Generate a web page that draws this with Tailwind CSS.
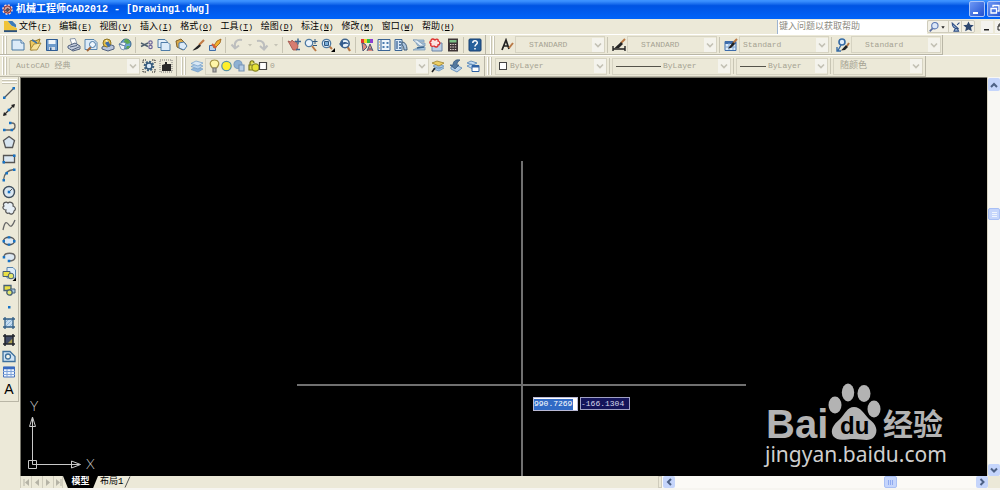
<!DOCTYPE html>
<html lang="zh-CN">
<head>
<meta charset="utf-8">
<title>机械工程师CAD2012 - [Drawing1.dwg]</title>
<script src="https://cdn.jsdelivr.net/npm/@tailwindcss/browser@4"></script>
</head>
<body class="flex h-screen flex-col overflow-hidden bg-[#ece9d8] font-['Liberation_Mono','Noto_Sans_CJK_SC',monospace] text-[8px] text-black">
<svg class="hidden" aria-hidden="true">
  <symbol id="chev" viewBox="0 0 12 14"><path d="M3 5.500l3 3 3-3" fill="none" stroke="#c3c1b4" stroke-width="1.600"/></symbol>
  <symbol id="dropdot" viewBox="0 0 6 14"><path d="M1 6h4l-2 2.500z" fill="#c5c3b6"/></symbol>
  <symbol id="layers" viewBox="0 0 14 14"><g stroke="#6f9cc8" stroke-width=".7"><path d="M1 10.500l5-2.500 7 2-5 3z" fill="#8fb4da"/><path d="M1 7.500l5-2.500 7 2-5 3z" fill="#b5d0ea"/><path d="M1 4.500l5-2.500 7 2-5 3z" fill="#d9e8f5"/></g></symbol>
  <symbol id="brush" viewBox="0 0 14 14"><path d="M13 2L8 7" stroke="#c07a45" stroke-width="2.200"/><path d="M8.500 6.200l1.500 1.600c-2 2-4 4.200-8.500 4.700 1.500-1.500 4-4.100 7-6.300z" fill="#222"/></symbol>
</svg>

<header class="flex h-[19px] shrink-0 items-center overflow-hidden bg-linear-to-b from-[#3c92ff] from-5% via-[#0054e3] via-30% to-[#0064fa] pl-px text-white">
  <svg class="mr-px size-[13px] shrink-0" viewBox="0 0 14 14"><circle cx="7" cy="7" r="4.500" fill="#c94f45" stroke="#f0d0cc" stroke-width="2.600" stroke-dasharray="2 1.500"/><circle cx="7" cy="7" r="3.800" fill="#d8a8a0" stroke="#8c2c2c"/><path d="M4 8l3-3 3 2-3 3z" fill="#534a5e"/></svg>
  <h1 class="min-w-0 flex-1 pl-px text-[10px] leading-[19px] font-bold whitespace-nowrap">机械工程师CAD2012 - [Drawing1.dwg]</h1>
  <div class="flex h-[17px] w-[31px] shrink-0 gap-[2px]">
    <button aria-label="最小化" class="h-[16px] w-[16px] shrink-0 rounded-[2px] border border-[#a9c4f8] bg-linear-to-br from-[#6d97f5] to-[#2450cf]"><svg viewBox="0 0 14 14"><path d="M3 10h5v2H3z" fill="#fff"/></svg></button>
    <button aria-label="还原" class="h-[16px] w-[16px] shrink-0 rounded-[2px] border border-[#a9c4f8] bg-linear-to-br from-[#6d97f5] to-[#2450cf]"><svg viewBox="0 0 14 14"><path d="M5 5V3.500h6V9H9.500M3 6.500h5.500V11H3z" fill="none" stroke="#fff" stroke-width="1.300"/></svg></button>
  </div>
</header>

<nav class="flex h-[15px] shrink-0 items-center overflow-hidden pl-[4px]">
  <svg class="size-[13px] shrink-0" viewBox="0 0 14 14"><path d="M1 1h5l3 3v8H1z" fill="#fff"/><path d="M0 1h4l4 5 6 3v4H0z" fill="#f0c43a"/><path d="M4 1h5l4 4v3L8 6z" fill="#3e7bb8"/><path d="M0 11h14v2H0z" fill="#28507e"/></svg>
  <div class="grid w-[403px] shrink-0 grid-cols-10 text-left text-[8px] leading-[15px] whitespace-nowrap">
    <button class="pl-[2px] text-left"><span class="text-[9px]">文件</span>(<u>F</u>)</button>
    <button class="pl-[2px] text-left"><span class="text-[9px]">编辑</span>(<u>E</u>)</button>
    <button class="pl-[2px] text-left"><span class="text-[9px]">视图</span>(<u>V</u>)</button>
    <button class="pl-[2px] text-left"><span class="text-[9px]">插入</span>(<u>I</u>)</button>
    <button class="pl-[2px] text-left"><span class="text-[9px]">格式</span>(<u>O</u>)</button>
    <button class="pl-[2px] text-left"><span class="text-[9px]">工具</span>(<u>T</u>)</button>
    <button class="pl-[2px] text-left"><span class="text-[9px]">绘图</span>(<u>D</u>)</button>
    <button class="pl-[2px] text-left"><span class="text-[9px]">标注</span>(<u>N</u>)</button>
    <button class="pl-[2px] text-left"><span class="text-[9px]">修改</span>(<u>M</u>)</button>
    <button class="pl-[2px] text-left"><span class="text-[9px]">窗口</span>(<u>W</u>)</button>
  </div>
  <button class="shrink-0 pl-[2px] leading-[15px] whitespace-nowrap"><span class="text-[9px]">帮助</span>(<u>H</u>)</button>
  <div class="min-w-0 flex-1"></div>
  <input aria-label="键入问题以获取帮助" placeholder="键入问题以获取帮助" class="h-[14px] w-[150px] shrink-0 border-l border-[#9db4d0] bg-white px-px text-[9px] leading-[14px] placeholder:text-[#8c8a80]">
  <div class="flex h-[13px] w-[48px] shrink-0 items-center rounded-[2px] border border-[#cfccbc] bg-[#f2f0e6]">
    <button aria-label="搜索" class="flex w-[20px] items-center"><svg class="size-[12px]" viewBox="0 0 14 14"><path d="M2 12l4-4" stroke="#5c6fa0" stroke-width="2"/><circle cx="8" cy="5.500" r="3.700" fill="#dbe7f8" stroke="#5b78b4" stroke-width="1.300"/></svg><svg class="h-[12px] w-[6px]" viewBox="0 0 6 14"><path d="M1 6h4L3 9z" fill="#222"/></svg></button>
    <button aria-label="通讯中心" class="flex w-[13px] justify-center border-l border-[#cfccbc]"><svg class="size-[11px]" viewBox="0 0 14 14"><path d="M2 2l9 8M3 2c-1 5 2 8 8 8M7 9l-2 4h6L9 9M9 5l3-3" fill="#94b3d6" stroke="#2f4c80" stroke-width="1.300"/></svg></button>
    <button aria-label="收藏夹" class="flex w-[13px] justify-center border-l border-[#cfccbc]"><svg class="size-[11px]" viewBox="0 0 14 14"><path d="M7 .5l2 4.300 4.700.5-3.500 3.100 1 4.800L7 10.700l-4.200 2.500 1-4.800L.3 5.300 5 4.800z" fill="#2c466f"/></svg></button>
  </div>
  <div class="flex w-[25px] shrink-0 gap-[2px] pl-[6px]">
    <button aria-label="最小化图形" class="size-[12px] shrink-0 bg-[#f4f3ee]"><svg viewBox="0 0 12 12"><path d="M3 8h5v1.500H3z" fill="#222"/></svg></button>
    <button aria-label="还原图形" class="size-[12px] shrink-0 bg-[#f4f3ee]"><svg viewBox="0 0 12 12"><path d="M4 5V3h5v4H8M3 5h4v4H3z" fill="none" stroke="#222"/></svg></button>
  </div>
</nav>

<!-- Upper toolbar row -->
<div class="flex h-[21px] shrink-0 overflow-hidden border-t border-white">
  <div class="flex h-[20px] shrink-0 items-center border-r border-b border-[#b9b6a6] pr-[2px]">
    <div class="flex w-[9px] gap-px pl-[2px]"><i class="h-[18px] w-[2px] border-l border-white bg-[#c8c5b4]"></i><i class="h-[18px] w-[2px] border-l border-white bg-[#c8c5b4]"></i></div>
    <button aria-label="新建" class="flex w-[17px] justify-center"><svg class="size-[14px]" viewBox="0 0 14 14"><path d="M1 2h9l3 3v7H1z" fill="#dcebf8" stroke="#4878a4"/><path d="M10 2v3h3" fill="#fff" stroke="#4878a4"/></svg></button>
    <button aria-label="打开" class="flex w-[17px] justify-center"><svg class="size-[14px]" viewBox="0 0 14 14"><path d="M2 3l3-1 2 1 5-2-3 10-6 1z" fill="#eec860" stroke="#9b7a26"/><path d="M2 12l4-6 7-1-4 7z" fill="#f8e29a" stroke="#9b7a26" stroke-width=".8"/><path d="M4 2l5 3" stroke="#3e74a8" stroke-width="1.500"/></svg></button>
    <button aria-label="保存" class="flex w-[17px] justify-center"><svg class="size-[14px]" viewBox="0 0 14 14"><path d="M1.500 1.500h11v11h-11z" fill="#6f9ccc" stroke="#2f5c94"/><path d="M3.500 2h7v4h-7z" fill="#f0f5fa"/><path d="M4 9h6v3H4z" fill="#d4dde8"/><path d="M5 9.500h1.500V12H5z" fill="#2f5c94"/></svg></button>
    <i class="mx-[2px] h-[16px] w-px bg-[#c8c5b4]"></i>
    <button aria-label="打印" class="flex w-[17px] justify-center"><svg class="size-[14px]" viewBox="0 0 14 14"><path d="M3 1l5-.5 2 5-5 1z" fill="#fff" stroke="#6f7f98" stroke-width=".8"/><path d="M1 8l7-3 5 3v3l-7 2-5-3z" fill="#c4cddd" stroke="#51617e"/><path d="M3 9l7-1.500M5 12l7-3" stroke="#51617e"/></svg></button>
    <button aria-label="打印预览" class="flex w-[17px] justify-center"><svg class="size-[14px]" viewBox="0 0 14 14"><path d="M1 1.500h9l3 3v7H1z" fill="#dcebf8" stroke="#5885ae"/><path d="M3 13l4-4" stroke="#a5673a" stroke-width="2"/><circle cx="8.500" cy="6.500" r="3" fill="#eef6fd" stroke="#4878a4"/></svg></button>
    <button aria-label="发布" class="flex w-[17px] justify-center"><svg class="size-[14px]" viewBox="0 0 14 14"><path d="M1 9l7-3 5 2v3l-6 2-6-2z" fill="#b8c4da" stroke="#51617e"/><circle cx="6" cy="5" r="4" fill="#e6be48" stroke="#8d7426"/><path d="M4 5l3-2 3 5-3 1z" fill="#3f6da8"/><path d="M4 3l2-1 1 2" fill="#fff"/></svg></button>
    <button aria-label="三维 DWF" class="flex w-[17px] justify-center"><svg class="size-[14px]" viewBox="0 0 14 14"><circle cx="8" cy="6" r="5" fill="#68a7d3" stroke="#39658c"/><path d="M7 1c3 0 5 2 5 4L9 6 6 4zM9 8l3 0-2 3-2-1z" fill="#5ea84f"/><path d="M1 6l6 2-1 4-3-1zM1 6l4-2 3 1-1 3z" fill="#eef4fb" stroke="#56779c" stroke-width=".7"/></svg></button>
    <i class="mx-[2px] h-[16px] w-px bg-[#c8c5b4]"></i>
    <button aria-label="剪切" class="flex w-[17px] justify-center"><svg class="size-[14px]" viewBox="0 0 14 14"><path d="M1 5l7 3.500M1 8.500L8 5" stroke="#506070" stroke-width="1.400"/><circle cx="10.500" cy="4.500" r="1.700" fill="none" stroke="#6c6499" stroke-width="1.200"/><circle cx="10.500" cy="9" r="1.700" fill="none" stroke="#6c6499" stroke-width="1.200"/></svg></button>
    <button aria-label="复制" class="flex w-[17px] justify-center"><svg class="size-[14px]" viewBox="0 0 14 14"><path d="M1 1.500h7l2 2v6H1z" fill="#e4eff9" stroke="#4f7ca8"/><path d="M4 4.500h7l2 2v6H4z" fill="#dcebf8" stroke="#4f7ca8"/></svg></button>
    <button aria-label="粘贴" class="flex w-[17px] justify-center"><svg class="size-[14px]" viewBox="0 0 14 14"><path d="M2 3l5-2 5 5-3 6-6-3z" fill="#d8a94a" stroke="#80622a"/><path d="M5 5l5-1 3 4-3 4-5-2z" fill="#dcebf8" stroke="#4f7ca8"/></svg></button>
    <button aria-label="特性匹配" class="flex w-[17px] justify-center"><svg class="size-[14px]"><use href="#brush"/></svg></button>
    <button aria-label="块编辑器" class="flex w-[17px] justify-center"><svg class="size-[14px]" viewBox="0 0 14 14"><path d="M1.500 7.500h6v5h-6z" fill="#b9d3ee" stroke="#3f6da8"/><path d="M13 1L9 3 5 9l2 1 5-5z" fill="#f1b02e" stroke="#955d16" stroke-width=".8"/><path d="M4 6l4 4" stroke="#d65c3b" stroke-width="2"/></svg></button>
    <i class="mx-[2px] h-[16px] w-px bg-[#c8c5b4]"></i>
    <button aria-label="放弃" class="flex w-[18px] justify-center"><svg class="size-[14px]" viewBox="0 0 14 14"><path d="M12 2C7 1 4 4 5 9M1.500 6.500l3.500 4 4-3" fill="none" stroke="#bdbebe" stroke-width="2"/></svg></button>
    <button aria-label="放弃列表" class="flex w-[7px] justify-center"><svg class="h-[14px] w-[6px]"><use href="#dropdot"/></svg></button>
    <button aria-label="重做" class="flex w-[18px] justify-center"><svg class="size-[14px]" viewBox="0 0 14 14"><path d="M2 3c5-1 8 2 7 7M5 8l4 3.500 3.500-4" fill="none" stroke="#bdbebe" stroke-width="2"/></svg></button>
    <button aria-label="重做列表" class="flex w-[9px] justify-center"><svg class="h-[14px] w-[6px]"><use href="#dropdot"/></svg></button>
    <i class="mx-[2px] h-[16px] w-px bg-[#c8c5b4]"></i>
    <button aria-label="实时平移" class="flex w-[17px] justify-center"><svg class="size-[14px]" viewBox="0 0 14 14"><path d="M1 3l3 1 1-2 2 2 2-1 2 5-1 4H6z" fill="#d77c70" stroke="#9c5148" stroke-width=".8"/><path d="M11 .5v6M8 3.500h6M9 11.500h4" stroke="#3e6790" stroke-width="1.500"/></svg></button>
    <button aria-label="实时缩放" class="flex w-[17px] justify-center"><svg class="size-[14px]" viewBox="0 0 14 14"><path d="M8 8l4 5" stroke="#b87845" stroke-width="2"/><circle cx="5" cy="5" r="3.700" fill="#eaf3fb" stroke="#507ba3" stroke-width="1.300"/><path d="M11 1v5M8.500 3.500h5M9 7.500h4" stroke="#31587f"/></svg></button>
    <button aria-label="窗口缩放" class="flex w-[17px] justify-center"><svg class="size-[14px]" viewBox="0 0 14 14"><path d="M8 8l3 3" stroke="#b87845" stroke-width="2"/><circle cx="5.500" cy="5.500" r="4.200" fill="#eaf3fb" stroke="#507ba3" stroke-width="1.300"/><path d="M3.500 3.500h4v4h-4z" fill="#7bafda" stroke="#31587f"/><path d="M14 10v4h-4z"/></svg></button>
    <button aria-label="缩放上一个" class="flex w-[17px] justify-center"><svg class="size-[14px]" viewBox="0 0 14 14"><path d="M9 8l3 5" stroke="#b87845" stroke-width="2.200"/><circle cx="7" cy="5.500" r="4.200" fill="#eaf3fb" stroke="#40658e" stroke-width="1.500"/><path d="M1 6l4-4v2.500c3-1 5 0 6 2-2-1-4-1-6 0v3z" fill="#355d8e"/></svg></button>
    <i class="mx-[2px] h-[16px] w-px bg-[#c8c5b4]"></i>
    <button aria-label="特性" class="flex w-[17px] justify-center"><svg class="size-[14px]" viewBox="0 0 14 14"><path d="M1 1h3v4H1z" fill="#e33535"/><path d="M4 1h3v4H4z" fill="#efdc27"/><path d="M7 1h3v4H7z" fill="#32b84b"/><path d="M10 1h3v4h-3z" fill="#8d3fd1"/><path d="M2 5l3 1 2 3-4 4zM7 13l3-7 3 7M8 11h4" fill="#dc8b80" stroke="#4e5878"/></svg></button>
    <button aria-label="设计中心" class="flex w-[17px] justify-center"><svg class="size-[14px]" viewBox="0 0 14 14"><path d="M1 1.500h12v11H1z" fill="#edf4fb" stroke="#396394"/><path d="M4 2v10" stroke="#396394"/><path d="M5.500 4h2v2h-2zM9.500 4h2v2h-2zM5.500 8h2v2h-2zM9.500 8h2v2h-2z" fill="#4b7bb0"/><path d="M2 4h1M2 7h1M2 10h1" stroke="#d69a34"/></svg></button>
    <button aria-label="工具选项板" class="flex w-[18px] justify-center"><svg class="size-[14px]" viewBox="0 0 14 14"><path d="M1 1.500h7v11H1z" fill="#dcebf8" stroke="#396394"/><path d="M3 3v8M5 4h2M5 7h2M5 10h2" stroke="#396394" stroke-width="1.300"/><path d="M8 4c3 0 5 3 5 8h-3c0-3-1-5-2-5z" fill="#adc6df" stroke="#3c5977"/></svg></button>
    <button aria-label="图纸集管理器" class="flex w-[17px] justify-center"><svg class="size-[14px]" viewBox="0 0 14 14"><path d="M1 2h11v2H4zM4 5h9v3H6zM1 12l6-3h6v3z" fill="#a8c6df" stroke="#7d9ab6" stroke-width=".8"/><path d="M1 2l7 6h5L5 2z" fill="#e1edf6" stroke="#7d9ab6" stroke-width=".8"/><path d="M5 10l7-1" stroke="#39658f" stroke-width="1.500"/></svg></button>
    <button aria-label="标记集管理器" class="flex w-[17px] justify-center"><svg class="size-[14px]" viewBox="0 0 14 14"><path d="M3 5h10v8H3z" fill="#bdd0e5" stroke="#6b84a5"/><path d="M2 3c0-3 3-2 4-1 2-2 4 0 3 1 3 1 2 4 0 4 0 3-3 2-4 1-3 1-4-1-3-2-2-1-1-3 0-3z" fill="#fbe3e1" stroke="#dc3030" stroke-width="1.300"/></svg></button>
    <button aria-label="计算器" class="flex w-[17px] justify-center"><svg class="size-[14px]" viewBox="0 0 14 14"><path d="M2 .5h10v13H2z" fill="#3f3638"/><path d="M3.500 2h7v2.500h-7z" fill="#7cc286"/><path d="M4 6.500h7M4 9h7M4 11.500h7" stroke="#e3d5d0" stroke-width="1.200" stroke-dasharray="1.400 1"/></svg></button>
    <i class="mx-[2px] h-[16px] w-px bg-[#c8c5b4]"></i>
    <button aria-label="帮助" class="flex w-[17px] justify-center"><svg class="size-[14px]" viewBox="0 0 14 14"><rect x="1" y="1" width="12" height="12" rx="1" fill="#28619c" stroke="#173f70"/><path d="M4.800 5c0-3 4.500-2.800 4.500-.3C9.300 6.500 7 6.500 7 8.500M7 10v1.600" fill="none" stroke="#fff" stroke-width="1.500"/></svg></button>
  </div>
  <div class="flex h-[20px] shrink-0 items-center border-r border-b border-[#b9b6a6] pr-px">
    <div class="flex w-[12px] gap-px pl-[4px]"><i class="h-[18px] w-[2px] border-l border-white bg-[#c8c5b4]"></i><i class="h-[18px] w-[2px] border-l border-white bg-[#c8c5b4]"></i></div>
    <button aria-label="文字样式" class="flex w-[17px] justify-center"><svg class="size-[14px]" viewBox="0 0 14 14"><path d="M2 12L6 2l3 9M3 8h5" fill="none" stroke="#222" stroke-width="1.700"/><path d="M13 5l-4 5" stroke="#b87845" stroke-width="2"/></svg></button>
    <div class="flex h-[17px] w-[90px] items-center border border-[#d6d3c2] pl-[13px]"><select aria-label="文字样式列表" disabled class="h-[15px] min-w-0 flex-1 appearance-none bg-transparent text-[#a5a292] opacity-100"><option>STANDARD</option></select><svg class="h-[14px] w-[12px] bg-[#f4f3ec]"><use href="#chev"/></svg></div>
    <i class="mx-[2px] h-[16px] w-px bg-[#c8c5b4]"></i>
    <button aria-label="标注样式" class="flex w-[17px] justify-center"><svg class="size-[14px]" viewBox="0 0 14 14"><path d="M1 8v5M13 8v5M1 11h12" stroke="#222" stroke-width="1.400"/><path d="M13 1L9 5" stroke="#b87845" stroke-width="2"/><path d="M9 4l2 2-4 4-5 .5z" fill="#222"/></svg></button>
    <div class="flex h-[17px] w-[90px] items-center border border-[#d6d3c2] pl-[13px]"><select aria-label="标注样式列表" disabled class="h-[15px] min-w-0 flex-1 appearance-none bg-transparent text-[#a5a292] opacity-100"><option>STANDARD</option></select><svg class="h-[14px] w-[12px] bg-[#f4f3ec]"><use href="#chev"/></svg></div>
    <i class="mx-[2px] h-[16px] w-px bg-[#c8c5b4]"></i>
    <button aria-label="表格样式" class="flex w-[17px] justify-center"><svg class="size-[14px]" viewBox="0 0 14 14"><path d="M1 3.500h11v9H1z" fill="#dcebf8" stroke="#3d6cab"/><path d="M1 5h11" stroke="#3d6cab" stroke-width="2"/><path d="M1 9h11M5 5v7M9 5v7" stroke="#7da2d0"/><path d="M13 1L9 5" stroke="#b87845" stroke-width="2"/><path d="M9 4l2 2-4 4-3 .5z" fill="#222"/></svg></button>
    <div class="flex h-[17px] w-[90px] items-center border border-[#d6d3c2] pl-[3px]"><select aria-label="表格样式列表" disabled class="h-[15px] min-w-0 flex-1 appearance-none bg-transparent text-[#a5a292] opacity-100"><option>Standard</option></select><svg class="h-[14px] w-[12px] bg-[#f4f3ec]"><use href="#chev"/></svg></div>
    <i class="mx-[2px] h-[16px] w-px bg-[#c8c5b4]"></i>
    <button aria-label="多重引线样式" class="flex w-[17px] justify-center"><svg class="size-[14px]" viewBox="0 0 14 14"><circle cx="6" cy="4" r="3" fill="#e2eefa" stroke="#386ca5" stroke-width="1.600"/><path d="M5 7l-3 5.500M1 9v4h4" fill="none" stroke="#386ca5" stroke-width="1.400"/><path d="M13 5l-2 3" stroke="#b87845" stroke-width="2"/><path d="M10 7l2 2-3 3-4 .5z" fill="#222"/></svg></button>
    <div class="flex h-[17px] w-[90px] items-center border border-[#d6d3c2] pl-[13px]"><select aria-label="多重引线样式列表" disabled class="h-[15px] min-w-0 flex-1 appearance-none bg-transparent text-[#a5a292] opacity-100"><option>Standard</option></select><svg class="h-[14px] w-[12px] bg-[#f4f3ec]"><use href="#chev"/></svg></div>
  </div>
</div>

<!-- Lower toolbar row -->
<div class="flex h-[22px] shrink-0 overflow-hidden border-t border-white">
  <div class="flex h-[21px] shrink-0 items-center border-r border-b border-[#b9b6a6] pr-[2px]">
    <div class="flex w-[9px] gap-px pl-[2px]"><i class="h-[18px] w-[2px] border-l border-white bg-[#c8c5b4]"></i><i class="h-[18px] w-[2px] border-l border-white bg-[#c8c5b4]"></i></div>
    <div class="flex h-[17px] w-[131px] items-center border border-[#d6d3c2] pl-[6px]"><select aria-label="工作空间" disabled class="h-[15px] min-w-0 flex-1 appearance-none bg-transparent text-[#a5a292] opacity-100"><option>AutoCAD 经典</option></select><svg class="h-[14px] w-[12px] bg-[#f4f3ec]"><use href="#chev"/></svg></div>
    <button aria-label="工作空间设置" class="flex w-[17px] justify-center"><svg class="size-[14px]" viewBox="0 0 14 14"><path d="M1 4V1h3M10 1h3v3M13 10v3h-3M4 13H1v-3" fill="none" stroke="#222" stroke-dasharray="1.500 1"/><circle cx="7" cy="7" r="4.300" fill="none" stroke="#3c6080" stroke-width="2" stroke-dasharray="2 1.300"/><circle cx="7" cy="7" r="3" fill="#dcebf8" stroke="#34587a" stroke-width="1.500"/></svg></button>
    <button aria-label="我的工作空间" class="flex w-[17px] justify-center"><svg class="size-[14px]" viewBox="0 0 14 14"><path d="M1 1h12v12H1z" fill="none" stroke="#777" stroke-dasharray="1 1"/><path d="M3 6l3-1V3h2v2h4v7H3z" fill="#282828"/></svg></button>
  </div>
  <div class="flex h-[21px] shrink-0 items-center border-r border-b border-[#b9b6a6] pr-[2px]">
    <div class="flex w-[11px] gap-px pl-[4px]"><i class="h-[18px] w-[2px] border-l border-white bg-[#c8c5b4]"></i><i class="h-[18px] w-[2px] border-l border-white bg-[#c8c5b4]"></i></div>
    <button aria-label="图层特性管理器" class="flex w-[17px] justify-center"><svg class="size-[14px]"><use href="#layers"/></svg></button>
    <div class="flex h-[17px] w-[224px] items-center border border-[#d6d3c2] pl-[2px]">
      <svg class="h-[14px] w-[60px] shrink-0" viewBox="0 0 60 14"><g stroke-width="1.200"><path d="M4.500 9C0 4 3 1 6.500 1S13 4 8.500 9z" fill="#fff6a8" stroke="#a49448"/><path d="M5 9h3v4H5z" fill="#b2b2b2" stroke="#777"/><circle cx="18.500" cy="7" r="4.700" fill="#fff02a" stroke="#5b93a4"/><circle cx="30" cy="5.500" r="4" fill="#8fb1d3" stroke="#7f9fc2"/><path d="M31 6h5v6h-5z" fill="#b6cde5" stroke="#7894b4"/><path d="M42 6V4c0-3 4-3 4 0M41 6h5v5h-5z" fill="#e0dc4c" stroke="#77761f"/><circle cx="47.500" cy="8.500" r="3.600" fill="#e7e236" stroke="#8b8a23"/><path d="M51.500 3.500h7v7h-7z" fill="#fff" stroke="#444"/></g></svg>
      <select aria-label="图层" disabled class="h-[15px] min-w-0 flex-1 appearance-none bg-transparent pl-[2px] text-[#a5a292] opacity-100"><option>0</option></select><svg class="h-[14px] w-[12px] bg-[#f4f3ec]"><use href="#chev"/></svg></div>
    <button aria-label="置为当前图层" class="flex w-[18px] justify-center"><svg class="size-[14px]" viewBox="0 0 14 14"><path d="M2 10l4-2 7 1-5 3zM2 7l4-2 7 2-5 3z" fill="#a5c7e7" stroke="#6c95be" stroke-width=".8"/><path d="M1 4l5-2 7 2-5 3z" fill="#edcf64" stroke="#9c8130" stroke-width=".8"/><path d="M1 13l3-4" stroke="#222" stroke-width="1.500"/></svg></button>
    <button aria-label="上一个图层" class="flex w-[17px] justify-center"><svg class="size-[14px]" viewBox="0 0 14 14"><path d="M2 8l5-2 6 3-5 4-6-3z" fill="#b8d2eb" stroke="#6c95be"/><path d="M11 1C6 0 4 3 4 6H1l5 4 4-4H8c0-2 1-4 3-5z" fill="#54799f" stroke="#2f5279" stroke-width=".7"/></svg></button>
    <button aria-label="图层状态管理器" class="flex w-[18px] justify-center"><svg class="size-[14px]" viewBox="0 0 14 14"><path d="M1 7l4-2 6 2-4 3zM1 4l4-2 6 2-4 2z" fill="#c5dcf2" stroke="#6c95be"/><path d="M6 6.500h7v6H6z" fill="#fff" stroke="#2f62a5"/><path d="M6 7.500h7" stroke="#2f62a5" stroke-width="2"/></svg></button>
  </div>
  <div class="flex h-[21px] shrink-0 items-center border-r border-b border-[#b9b6a6] pr-[2px]">
    <div class="flex w-[10px] gap-px pl-[2px]"><i class="h-[18px] w-[2px] border-l border-white bg-[#c8c5b4]"></i><i class="h-[18px] w-[2px] border-l border-white bg-[#c8c5b4]"></i></div>
    <div class="flex h-[17px] w-[112px] items-center border border-[#d6d3c2] pl-[3px]"><i class="mr-[3px] size-[8px] border border-[#444] bg-white"></i><select aria-label="颜色" disabled class="h-[15px] min-w-0 flex-1 appearance-none bg-transparent text-[#a5a292] opacity-100"><option>ByLayer</option></select><svg class="h-[14px] w-[12px] bg-[#f4f3ec]"><use href="#chev"/></svg></div>
    <i class="mx-[2px] h-[16px] w-px bg-[#c8c5b4]"></i>
    <div class="flex h-[17px] w-[119px] items-center border border-[#d6d3c2] pl-[3px]"><i class="mr-[2px] h-px w-[45px] bg-[#55534a]"></i><select aria-label="线型" disabled class="h-[15px] min-w-0 flex-1 appearance-none bg-transparent text-[#a5a292] opacity-100"><option>ByLayer</option></select><svg class="h-[14px] w-[12px] bg-[#f4f3ec]"><use href="#chev"/></svg></div>
    <i class="mx-[2px] h-[16px] w-px bg-[#c8c5b4]"></i>
    <div class="flex h-[17px] w-[92px] items-center border border-[#d6d3c2] pl-[3px]"><i class="mr-[2px] h-px w-[26px] bg-[#55534a]"></i><select aria-label="线宽" disabled class="h-[15px] min-w-0 flex-1 appearance-none bg-transparent text-[#a5a292] opacity-100"><option>ByLayer</option></select><svg class="h-[14px] w-[12px] bg-[#f4f3ec]"><use href="#chev"/></svg></div>
    <i class="mx-[2px] h-[16px] w-px bg-[#c8c5b4]"></i>
    <div class="flex h-[17px] w-[90px] items-center border border-[#d6d3c2] pl-[6px]"><select aria-label="打印样式" disabled class="h-[15px] min-w-0 flex-1 appearance-none bg-transparent text-[9px] leading-[15px] text-[#a5a292] opacity-100"><option>随颜色</option></select><svg class="h-[14px] w-[12px] bg-[#f4f3ec]"><use href="#chev"/></svg></div>
  </div>
</div>

<div class="flex min-h-0 flex-1">
  <aside class="flex w-[20px] shrink-0 flex-col">
    <div class="flex h-[325px] w-[19px] flex-col items-center border-r border-b border-[#b9b6a6] pb-[4px]">
      <div class="flex h-[8px] flex-col gap-px pt-[2px]"><i class="h-[2px] w-[15px] border-t border-white bg-[#c8c5b4]"></i><i class="h-[2px] w-[15px] border-t border-white bg-[#c8c5b4]"></i></div>
      <div class="grid min-h-0 w-full flex-1 auto-rows-fr justify-items-center">
        <button aria-label="直线"><svg class="size-[14px]" viewBox="0 0 14 14"><path d="M2.500 11.500l9-9" stroke="#555" stroke-width="1.300"/><path d="M1 10.500h2.500V13H1zM10.500 1H13v2.500h-2.500z" fill="#1672c4"/></svg></button>
        <button aria-label="构造线"><svg class="size-[14px]" viewBox="0 0 14 14"><path d="M2 12L12 2" stroke="#333" stroke-width="1.300"/><path d="M1 13l1-4 3 3zM13 1L9 2l3 3z" fill="#222"/><path d="M5.700 5.700h2.600v2.600H5.700z" fill="#1672c4"/></svg></button>
        <button aria-label="多段线"><svg class="size-[14px]" viewBox="0 0 14 14"><path d="M2 11h8c4-1 4-7 0-7H8" fill="none" stroke="#666" stroke-width="1.300"/><path d="M1 9.700h2.500v2.500H1zM8.500 9.700H11v2.500H8.500zM7 2.700h2.500v2.500H7z" fill="#1672c4"/></svg></button>
        <button aria-label="正多边形"><svg class="size-[14px]" viewBox="0 0 14 14"><path d="M7 1.500l5.500 4-2 7h-7l-2-7z" fill="#d7e4ef" stroke="#555" stroke-width="1.300"/></svg></button>
        <button aria-label="矩形"><svg class="size-[14px]" viewBox="0 0 14 14"><path d="M1.500 3.500h11v7h-11z" fill="#dce8f2" stroke="#555" stroke-width="1.300"/><path d="M.5 9H3v2.500H.5zM11 2.500h2.500V5H11z" fill="#1672c4"/></svg></button>
        <button aria-label="圆弧"><svg class="size-[14px]" viewBox="0 0 14 14"><path d="M1.500 12C2 6 6 2 12 1.500" fill="none" stroke="#666" stroke-width="1.300"/><path d="M.5 11H3v2.500H.5zM3.500 4H6v2.500H3.500zM11 .5h2.500V3H11z" fill="#1672c4"/></svg></button>
        <button aria-label="圆"><svg class="size-[14px]" viewBox="0 0 14 14"><circle cx="7" cy="7" r="5.500" fill="#dce8f2" stroke="#3f4f5f" stroke-width="1.400"/><path d="M7 7l3-3" stroke="#555"/><path d="M5.700 5.700h2.600v2.600H5.700z" fill="#1672c4"/></svg></button>
        <button aria-label="修订云线"><svg class="size-[14px]" viewBox="0 0 14 14"><path d="M2 5C0 2 4 0 6 2c2-2 6 0 5 3 3 1 3 4 1 5 0 3-3 4-5 2-2 1-4-1-3-3-3 0-4-3-2-4z" fill="#e6eef5" stroke="#555" stroke-width="1.200"/></svg></button>
        <button aria-label="样条曲线"><svg class="size-[14px]" viewBox="0 0 14 14"><path d="M1 12C3 2 5 4 7 7s4 0 6-5" fill="none" stroke="#666" stroke-width="1.300"/></svg></button>
        <button aria-label="椭圆"><svg class="size-[14px]" viewBox="0 0 14 14"><ellipse cx="7" cy="7" rx="5.500" ry="3.700" fill="#dce8f2" stroke="#555" stroke-width="1.400"/><path d="M.5 6H3v2.500H.5zM11 6h2.500v2.500H11zM5.700 2.200h2.600v2.200H5.700zM5.700 9.600h2.600v2.200H5.700z" fill="#1672c4"/></svg></button>
        <button aria-label="椭圆弧"><svg class="size-[14px]" viewBox="0 0 14 14"><path d="M2 7c0-5 11-5 11 0 0 3-3 4-6 4" fill="#dce8f2" stroke="#666" stroke-width="1.400"/><path d="M.7 6h2.500v2.500H.7zM5.700 9.700h2.600v2.500H5.700z" fill="#1672c4"/></svg></button>
        <button aria-label="插入块"><svg class="size-[14px]" viewBox="0 0 14 14"><path d="M5 .5h6l2.500 2.500v8H5z" fill="#dcebf8" stroke="#5885ae"/><path d="M1 4.500h7v5H1z" fill="#eadf43" stroke="#476075"/><circle cx="9" cy="9" r="2.800" fill="#e2e66a" stroke="#476075"/><path d="M14 10.500V14h-3.500z"/></svg></button>
        <button aria-label="创建块"><svg class="size-[14px]" viewBox="0 0 14 14"><path d="M2 2.500h7v5H2z" fill="#eadf43" stroke="#476075" stroke-width="1.300"/><path d="M8 6h5v4H8z" fill="#a8c8e3" stroke="#476075"/><circle cx="7.500" cy="9.500" r="2.700" fill="#e2e66a" stroke="#476075" stroke-width="1.300"/></svg></button>
        <button aria-label="点"><svg class="size-[14px]" viewBox="0 0 14 14"><path d="M6 6h2.500v2.500H6z" fill="#1672c4"/></svg></button>
        <button aria-label="图案填充"><svg class="size-[14px]" viewBox="0 0 14 14"><path d="M3 3h8v8H3z" fill="#c5dcf0"/><path d="M3 7l4-4M3 11l8-8M7 11l4-4" stroke="#8fb6d8"/><path d="M3 1v12M11 1v12M1 3h12M1 11h12" stroke="#315e85" stroke-width="1.300"/></svg></button>
        <button aria-label="渐变色"><svg class="size-[14px]" viewBox="0 0 14 14"><path d="M3 3h8v8H3z" fill="#414b66"/><path d="M5 11l6-6v6z" fill="#a89d50"/><path d="M3 1v12M11 1v12M1 3h12M1 11h12" stroke="#20242c" stroke-width="1.500"/></svg></button>
        <button aria-label="面域"><svg class="size-[14px]" viewBox="0 0 14 14"><path d="M1 2.500h7l5 5v5H1z" fill="#cfe3f4" stroke="#3d6f9c" stroke-width="1.300"/><circle cx="6" cy="7.500" r="2.500" fill="#f4f4ea" stroke="#3d6f9c" stroke-width="1.300"/></svg></button>
        <button aria-label="表格"><svg class="size-[14px]" viewBox="0 0 14 14"><path d="M1.500 2h11v10h-11z" fill="#edf4fd" stroke="#4772bd"/><path d="M1 3h12" stroke="#396ac0" stroke-width="2.500"/><path d="M1 6.500h12M1 9.500h12M5 4v8M9 4v8" stroke="#7fa3da"/></svg></button>
        <button aria-label="多行文字" class="font-['Liberation_Sans',sans-serif] text-[14px] leading-[16px]">A</button>
      </div>
    </div>
  </aside>

  <div class="flex min-w-0 flex-1 flex-col">
    <div class="flex min-h-0 flex-1">
      <main class="relative min-w-0 flex-1 overflow-hidden border-t border-l border-[#77756a] bg-black">
        <i class="absolute top-[83px] bottom-0 left-[500px] w-[2px] bg-[#707070]"></i>
        <i class="absolute top-[306px] left-[276px] h-[2px] w-[449px] bg-[#707070]"></i>
        <div class="absolute top-[319px] left-[512px] flex gap-[2px]">
          <div class="flex h-[14px] w-[45px] items-center border border-[#b9b9d5] bg-white"><input aria-label="X 坐标" value="990.7269" class="h-[11px] w-[39px] bg-[#316ac5] text-[8px] text-white"></div>
          <input aria-label="Y 坐标" value="-166.1304" class="h-[13px] w-[50px] border border-[#a0a0c4] bg-[#14145a] text-[8px] text-[#d6d6ea]">
        </div>
        <!-- UCS icon -->
        <svg class="absolute bottom-0 left-[5px] h-[84px] w-[76px]" viewBox="0 0 76 84" fill="none" stroke="#c9c9c9"><path d="M2.500 68.500h8v8h-8zM6.500 72.500V25.500M3.500 34.500L6.500 25l3 9.500zM6.500 72.500h47M45.500 69l9 3.500-9 3.500z"/><g fill="#c9c9c9" stroke="none" font-family="Lato, sans-serif" font-weight="300" font-size="14"><text x="4" y="19">Y</text><text x="60" y="77">X</text></g></svg>
        <svg class="absolute right-[36px] bottom-[3px] h-[94px] w-[190px]" viewBox="0 0 190 94" fill="#b3b3b3">
          <ellipse cx="74" cy="26" rx="6.500" ry="8.500"/><ellipse cx="87" cy="13.500" rx="6.200" ry="9"/><ellipse cx="103" cy="14.500" rx="6.500" ry="8.500"/><ellipse cx="113" cy="30" rx="6.500" ry="8.500"/>
          <path d="M93 28c-7 0-9 7-14 12-7 6-10 11-7 17 5 6 12 3 21 3s15 3 20-2c5-6 2-13-5-18-5-5-8-12-15-12z"/>
          <text x="5" y="59" font-family="Liberation Sans, sans-serif" font-weight="700" font-size="40">Bai</text>
          <text x="79" y="55" font-family="Liberation Sans, sans-serif" font-weight="700" font-size="24" fill="#000">du</text>
          <text x="122" y="56" font-family="Noto Sans CJK SC, sans-serif" font-weight="700" font-size="30">经验</text>
          <text x="4" y="83" font-family="Noto Sans, sans-serif" font-size="21" fill="#cfcfcf">jingyan.baidu.com</text>
        </svg>
      </main>
      <div class="flex w-[13px] shrink-0 flex-col border-l border-[#ddd9c8] bg-[#f8f7f3] pt-px" role="group" aria-label="垂直滚动条">
        <button aria-label="向上滚动" class="h-[13px] rounded-[2px] bg-[#c5d5fb]"><svg class="size-[12px]" viewBox="0 0 12 12"><path d="M3 8l3-3 3 3" fill="none" stroke="#4d6185" stroke-width="2"/></svg></button>
        <div class="flex-[117]"></div>
        <div class="flex h-[12px] flex-col items-center justify-center gap-px rounded-[2px] border border-[#a9c0f5] bg-[#c5d5fb]"><i class="h-px w-[5px] bg-[#eef4fe]"></i><i class="h-px w-[5px] bg-[#eef4fe]"></i><i class="h-px w-[5px] bg-[#eef4fe]"></i></div>
        <div class="flex-[243]"></div>
        <button aria-label="向下滚动" class="h-[12px] rounded-[2px] bg-[#c5d5fb]"><svg class="size-[12px]" viewBox="0 0 12 12"><path d="M3 4.500l3 3 3-3" fill="none" stroke="#4d6185" stroke-width="2"/></svg></button>
      </div>
    </div>

    <footer class="flex h-[14px] shrink-0 items-start border-b-2 border-[#f6f5f0]">
      <div class="flex h-[12px] w-[43px] shrink-0 divide-x divide-[#cfccbc] border-x border-[#cfccbc]">
        <button aria-label="第一个" class="flex-1"><svg class="h-[11px] w-[10px]" viewBox="0 0 10 11"><path d="M3 2v7" stroke="#b5b3a6"/><path d="M8 2v7L4 5.500z" fill="#b5b3a6"/></svg></button>
        <button aria-label="上一个" class="flex-1"><svg class="h-[11px] w-[10px]" viewBox="0 0 10 11"><path d="M7 2v7L3 5.500z" fill="#b5b3a6"/></svg></button>
        <button aria-label="下一个" class="flex-1"><svg class="h-[11px] w-[10px]" viewBox="0 0 10 11"><path d="M3 2v7l4-3.500z" fill="#b5b3a6"/></svg></button>
        <button aria-label="最后一个" class="flex-1"><svg class="h-[11px] w-[10px]" viewBox="0 0 10 11"><path d="M7 2v7" stroke="#b5b3a6"/><path d="M2 2v7l4-3.500z" fill="#b5b3a6"/></svg></button>
      </div>
      <button class="h-[12px] w-[35px] bg-black text-[9px] leading-[12px] font-bold text-white [clip-path:polygon(0_0,100%_0,86%_100%,14%_100%)]">模型</button>
      <button class="h-[12px] pl-[2px] text-[9px] leading-[12px] whitespace-nowrap">布局1</button>
      <svg class="h-[12px] w-[8px]" viewBox="0 0 8 12"><path d="M2 11.500L7 .5" stroke="#555"/></svg>
      <div class="min-w-0 flex-1"></div>
      <div class="flex h-[12px] w-[330px] shrink-0 items-stretch bg-[#fbfaf6]" role="group" aria-label="水平滚动条">
        <i class="mr-px w-[4px] border border-[#cfccbc] bg-[#ece9d8]"></i>
        <button aria-label="向左滚动" class="w-[12px] rounded-[2px] bg-[#c5d5fb]"><svg class="size-[12px]" viewBox="0 0 12 12"><path d="M8 3L5 6l3 3" fill="none" stroke="#4d6185" stroke-width="2"/></svg></button>
        <div class="flex-[208]"></div>
        <div class="flex w-[13px] items-center justify-center gap-px rounded-[2px] border border-[#a9c0f5] bg-[#c5d5fb]"><i class="h-[5px] w-px bg-[#8faaf0]"></i><i class="h-[5px] w-px bg-[#8faaf0]"></i><i class="h-[5px] w-px bg-[#8faaf0]"></i></div>
        <div class="flex-[79]"></div>
        <button aria-label="向右滚动" class="w-[12px] rounded-[2px] bg-[#c5d5fb]"><svg class="size-[12px]" viewBox="0 0 12 12"><path d="M4.500 3l3 3-3 3" fill="none" stroke="#4d6185" stroke-width="2"/></svg></button>
      </div>
      <div class="w-[12px] shrink-0"></div>
    </footer>
  </div>
</div>
</body>
</html>
